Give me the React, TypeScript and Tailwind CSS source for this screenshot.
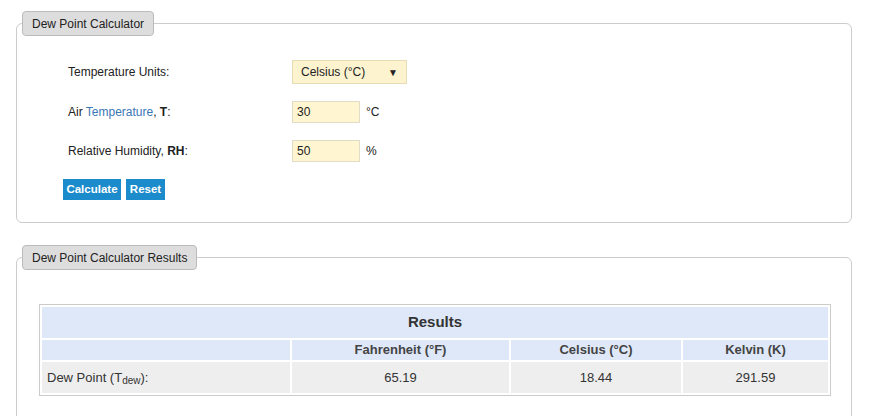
import React from 'react';

const font = { fontFamily: '"Liberation Sans", Arial, sans-serif' };

const Legend = ({ title }: { title: string }) => (
  <legend className="h-[25px] px-[9px] flex items-center bg-[#dddddd] border border-[#bbbbbb] rounded-[4px] text-[12px] text-[#222]">
    {title}
  </legend>
);

const App = () => {
  return (
    <div className="w-[871px] min-h-[416px] bg-white text-[#222] text-[12px]" style={font}>
      <fieldset className="ml-[16px] mt-[11px] w-[836px] px-[5px] border border-[#cccccc] rounded-[6px]">
        <Legend title="Dew Point Calculator" />
        <div className="pl-[41px] pt-[24px] pb-[22px]">
          <div className="flex items-center h-[24px] pl-[5px]">
            <div className="w-[224px]">Temperature Units:</div>
            <div className="w-[115px] h-[24px] flex items-center justify-between pl-[8px] pr-[8px] bg-[#fdf3cf] border border-[#e6ddb6]">
              <span>Celsius (°C)</span>
              <span className="text-[10px]">▼</span>
            </div>
          </div>
          <div className="flex items-center h-[22px] mt-[17px] pl-[5px]">
            <div className="w-[224px]">
              Air <span className="text-[#3a78b5]">Temperature</span>, <b>T</b>:
            </div>
            <input
              defaultValue="30"
              className="w-[68px] h-[22px] px-[4px] bg-[#fff5d0] border border-[#e0dcc8] outline-none"
            />
            <span className="ml-[6px]">°C</span>
          </div>
          <div className="flex items-center h-[22px] mt-[17px] pl-[5px]">
            <div className="w-[224px]">
              Relative Humidity, <b>RH</b>:
            </div>
            <input
              defaultValue="50"
              className="w-[68px] h-[22px] px-[4px] bg-[#fff5d0] border border-[#e0dcc8] outline-none"
            />
            <span className="ml-[6px]">%</span>
          </div>
          <div className="flex gap-[5px] mt-[17px]">
            <button className="w-[58px] h-[21px] bg-[#1b8bcb] text-white font-bold text-[11.5px]">Calculate</button>
            <button className="w-[39px] h-[21px] bg-[#1b8bcb] text-white font-bold text-[11.5px]">Reset</button>
          </div>
        </div>
      </fieldset>

      <fieldset className="ml-[16px] mt-[22px] w-[836px] px-[5px] border border-[#cccccc] rounded-[6px]">
        <Legend title="Dew Point Calculator Results" />
        <div className="pl-[17px] pt-[34px] pb-[30px]">
          <table className="w-[792px] border border-[#cccccc] border-separate border-spacing-[2px] text-[#333]">
            <tbody>
              <tr>
                <th colSpan={4} className="h-[31px] bg-[#dfe8f8] text-[15px] font-bold text-[#333]">
                  Results
                </th>
              </tr>
              <tr>
                <th className="w-[248px] h-[20px] bg-[#dfe8f8]"></th>
                <th className="w-[217px] bg-[#dfe8f8] text-[13px] font-bold text-[#444]">Fahrenheit (°F)</th>
                <th className="w-[170px] bg-[#dfe8f8] text-[13px] font-bold text-[#444]">Celsius (°C)</th>
                <th className="bg-[#dfe8f8] text-[13px] font-bold text-[#444]">Kelvin (K)</th>
              </tr>
              <tr className="text-[13px]">
                <td className="h-[31px] bg-[#eeeeee] pl-[5px] text-left">
                  Dew Point (T<sub className="text-[10px]">dew</sub>):
                </td>
                <td className="bg-[#eeeeee] text-center">65.19</td>
                <td className="bg-[#eeeeee] text-center">18.44</td>
                <td className="bg-[#eeeeee] text-center">291.59</td>
              </tr>
            </tbody>
          </table>
        </div>
      </fieldset>
    </div>
  );
};

export default App;
